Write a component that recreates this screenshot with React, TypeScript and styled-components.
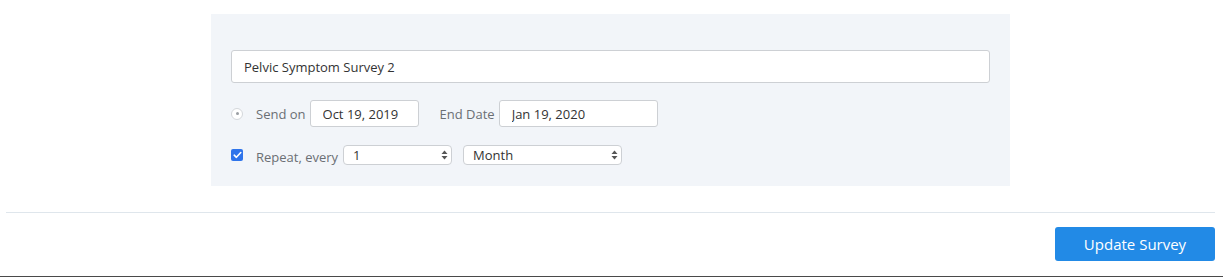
import React from 'react'
import styled, { createGlobalStyle } from 'styled-components'

const GlobalStyle = createGlobalStyle`
  html, body {
    margin: 0;
    padding: 0;
    background: #fff;
  }
  body {
    font-family: 'Open Sans', 'Liberation Sans', sans-serif;
  }
`

const Page = styled.div`
  height: 277px;
  box-sizing: border-box;
  padding: 14px 8px 0 6px;
  border-bottom: 1px solid #4a4a4a;
  display: flex;
  flex-direction: column;
`

const Panel = styled.div`
  align-self: center;
  width: 799px;
  box-sizing: border-box;
  background: #f2f5f9;
  padding: 36px 20px 21px 20px;
  display: flex;
  flex-direction: column;
`

const TitleInput = styled.input`
  height: 33px;
  box-sizing: border-box;
  border: 1px solid #cdd0d4;
  border-radius: 3px;
  background: #fff;
  padding: 0 12px;
  font-family: inherit;
  font-size: 13px;
  color: #333;
  outline: none;
`

const Row = styled.div<{ $top: number; $height: number }>`
  display: flex;
  align-items: center;
  height: ${p => p.$height}px;
  margin-top: ${p => p.$top}px;
`

const Radio = styled.span`
  width: 12px;
  height: 12px;
  box-sizing: border-box;
  border-radius: 50%;
  border: 1px solid #d4d7db;
  background: #fff;
  display: flex;
  align-items: center;
  justify-content: center;
  &::after {
    content: '';
    width: 3px;
    height: 3px;
    border-radius: 50%;
    background: #9a9ea3;
  }
`

const Check = styled.span`
  width: 12px;
  height: 12px;
  border-radius: 2px;
  background: #2f74eb;
  display: flex;
  align-items: center;
  justify-content: center;
`

const Label = styled.span<{ $left: number; $right: number; $drop?: number }>`
  font-size: 13px;
  line-height: 14px;
  color: #6b6f74;
  margin-left: ${p => p.$left}px;
  margin-right: ${p => p.$right}px;
  padding-top: ${p => p.$drop || 0}px;
  white-space: nowrap;
`

const DateInput = styled.input<{ $width: number }>`
  width: ${p => p.$width}px;
  height: 27px;
  box-sizing: border-box;
  border: 1px solid #cdd0d4;
  border-radius: 3px;
  background: #fff;
  padding: 0 12px;
  font-family: inherit;
  font-size: 13px;
  color: #333;
  outline: none;
`

const SelectWrap = styled.div<{ $width: number; $right?: number }>`
  position: relative;
  width: ${p => p.$width}px;
  height: 20px;
  margin-right: ${p => p.$right || 0}px;
`

const Select = styled.select`
  appearance: none;
  -webkit-appearance: none;
  display: block;
  width: 100%;
  height: 20px;
  box-sizing: border-box;
  border: 1px solid #cdd0d4;
  border-radius: 4px;
  background: #fff;
  padding: 0 20px 2px 9px;
  font-family: inherit;
  font-size: 13px;
  color: #333;
  outline: none;
`

const Arrows = styled.svg`
  position: absolute;
  right: 4px;
  top: 5px;
  pointer-events: none;
`

const Divider = styled.hr`
  width: 100%;
  margin: 26px 0 0 0;
  border: none;
  border-top: 1px solid #dfe6ec;
`

const Footer = styled.div`
  display: flex;
  justify-content: flex-end;
  margin-top: 14px;
`

const PrimaryButton = styled.button`
  width: 160px;
  height: 34px;
  border: none;
  border-radius: 3px;
  background: #228ae6;
  color: #fff;
  font-family: inherit;
  font-size: 15px;
  cursor: pointer;
`

const SelectArrows = () => (
  <Arrows width="7" height="10" viewBox="0 0 7 10">
    <path d="M3.5 0.5 L6.5 4 L0.5 4 Z" fill="#555" />
    <path d="M3.5 9.5 L6.5 6 L0.5 6 Z" fill="#555" />
  </Arrows>
)

const App = () => {
  return (
    <>
      <GlobalStyle />
      <Page>
        <Panel>
          <TitleInput defaultValue="Pelvic Symptom Survey 2" />
          <Row $top={17} $height={27}>
            <Radio />
            <Label $left={13} $right={4}>Send on</Label>
            <DateInput $width={109} defaultValue="Oct 19, 2019" />
            <Label $left={21} $right={4}>End Date</Label>
            <DateInput $width={159} defaultValue="Jan 19, 2020" />
          </Row>
          <Row $top={18} $height={20}>
            <Check>
              <svg width="9" height="8" viewBox="0 0 9 8">
                <path d="M1.2 4.2 L3.4 6.3 L7.8 1.5" fill="none" stroke="#fff" strokeWidth="1.6" strokeLinecap="round" strokeLinejoin="round" />
              </svg>
            </Check>
            <Label $left={13} $right={5} $drop={4}>Repeat, every</Label>
            <SelectWrap $width={109} $right={11}>
              <Select defaultValue="1">
                <option value="1">1</option>
                <option value="2">2</option>
                <option value="3">3</option>
              </Select>
              <SelectArrows />
            </SelectWrap>
            <SelectWrap $width={159}>
              <Select defaultValue="Month">
                <option>Day</option>
                <option>Week</option>
                <option>Month</option>
                <option>Year</option>
              </Select>
              <SelectArrows />
            </SelectWrap>
          </Row>
        </Panel>
        <Divider />
        <Footer>
          <PrimaryButton>Update Survey</PrimaryButton>
        </Footer>
      </Page>
    </>
  )
}

export default App
